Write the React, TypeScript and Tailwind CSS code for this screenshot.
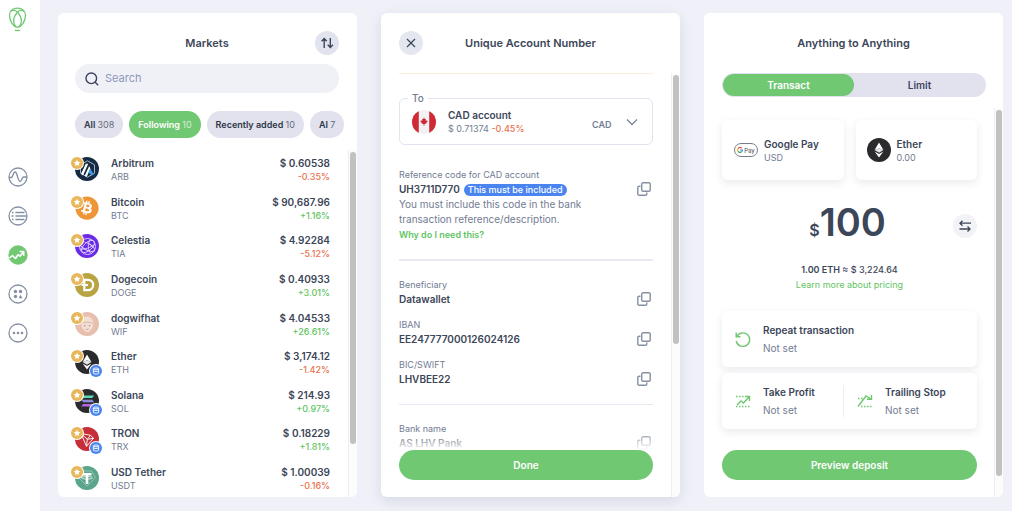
import { useState, type ReactNode } from 'react';
import { FaBitcoin } from 'react-icons/fa';

type Coin = {
  name: string;
  symbol: string;
  price: string;
  change: string;
  staked?: boolean;
  logo: ReactNode;
};

function Disc({ color, children }: { color: string; children?: ReactNode }) {
  return (
    <svg viewBox="0 0 24 24" className="size-6" aria-hidden="true">
      <circle cx="12" cy="12" r="12" fill={color} />
      {children}
    </svg>
  );
}

function EtherLogo() {
  return (
    <Disc color="#2b2b2e">
      <path d="M12 4.5 7.6 12.1 12 10.2l4.4 1.9z" fill="#fff" />
      <path d="m7.6 12.1 4.4 2.6 4.4-2.6-4.4-1.9z" fill="#e4e4e8" />
      <path d="m7.6 13.4 4.4 6.1 4.4-6.1-4.4 2.6z" fill="#fff" />
    </Disc>
  );
}

const coins: Coin[] = [
  {
    name: 'Arbitrum',
    symbol: 'ARB',
    price: '$ 0.60538',
    change: '-0.35%',
    logo: (
      <Disc color="#162a42">
        <path d="m12.5 3.8 7 4v8.4l-7 4-7-4V7.8z" fill="none" stroke="#9fb8cc" strokeWidth="1" />
        <path d="m6 17 4.8-10.2h2.4L8 18.4zM9.6 19l4.6-10 1.1 2.6-3.5 8.2z" fill="#fff" />
        <path d="m13.5 15.8 1.9-4.2 3.3 5.8-1.8 1.1z" fill="#3f9ae8" />
      </Disc>
    ),
  },
  {
    name: 'Bitcoin',
    symbol: 'BTC',
    price: '$ 90,687.96',
    change: '+1.16%',
    logo: <FaBitcoin className="size-6 text-[#ee9637]" />,
  },
  {
    name: 'Celestia',
    symbol: 'TIA',
    price: '$ 4.92284',
    change: '-5.12%',
    logo: (
      <Disc color="#6a2be6">
        <g fill="none" stroke="#e2d3ff" strokeWidth="0.9">
          <circle cx="12.5" cy="12.5" r="8" />
          <ellipse cx="12" cy="12.5" rx="8.4" ry="3.4" transform="rotate(28 12 12.5)" />
          <ellipse cx="13" cy="12.5" rx="8" ry="4" transform="rotate(-42 13 12.5)" />
          <path d="M15.5 5c-3 4-3 11 .5 14.5M5 15c5 .5 10-1 15-5" />
        </g>
      </Disc>
    ),
  },
  {
    name: 'Dogecoin',
    symbol: 'DOGE',
    price: '$ 0.40933',
    change: '+3.01%',
    logo: (
      <Disc color="#b9a444">
        <path d="M9.3 6.8H13a5.2 5.2 0 0 1 0 10.4H9.3zM6.5 12H13" fill="none" stroke="#fff" strokeWidth="2.2" />
      </Disc>
    ),
  },
  {
    name: 'dogwifhat',
    symbol: 'WIF',
    price: '$ 4.04533',
    change: '+26.61%',
    logo: (
      <Disc color="#e6bfae">
        <path d="M6 11.5C6 7 8.5 4.5 12 4.5s6 2.5 6.5 7l-1 4.5-3.5 4h-3l-4-4z" fill="#f3ded5" />
        <path d="M6 11.5c3-1.8 9-1.8 12.5 0" fill="none" stroke="#d9a997" strokeWidth="0.8" />
        <circle cx="9.8" cy="13.8" r="0.8" fill="#c08b7a" />
        <circle cx="14.6" cy="13.8" r="0.8" fill="#c08b7a" />
        <path d="M10.8 16.8c.8.9 2 .9 2.8 0" fill="none" stroke="#c08b7a" strokeWidth="0.8" />
      </Disc>
    ),
  },
  { name: 'Ether', symbol: 'ETH', price: '$ 3,174.12', change: '-1.42%', staked: true, logo: <EtherLogo /> },
  {
    name: 'Solana',
    symbol: 'SOL',
    price: '$ 214.93',
    change: '+0.97%',
    staked: true,
    logo: (
      <Disc color="#2b2b2e">
        <path d="M8.2 6.5h11l-2 2.5h-11z" fill="#5fd9b4" />
        <path d="M6.2 10.8h11l2 2.5h-11z" fill="#8a8fd6" />
        <path d="M8.2 15h11l-2 2.5h-11z" fill="#b565e0" />
      </Disc>
    ),
  },
  {
    name: 'TRON',
    symbol: 'TRX',
    price: '$ 0.18229',
    change: '+1.81%',
    staked: true,
    logo: (
      <Disc color="#c62f39">
        <path
          d="m6 6.5 9.5 1.8 3 3-7 8zM6 6.5l6.3 5.8 3.2-4M12.3 12.3l6.2-1M12.3 12.3l-.8 7"
          fill="none"
          stroke="#fff"
          strokeWidth="0.9"
          strokeLinejoin="round"
        />
      </Disc>
    ),
  },
  {
    name: 'USD Tether',
    symbol: 'USDT',
    price: '$ 1.00039',
    change: '-0.16%',
    logo: (
      <Disc color="#5ba58d">
        <path d="M7.5 5h9l4 6.5-8.5 8.5-8.5-8.5z" fill="none" stroke="#9ccbbb" strokeWidth="0.8" />
        <path d="M7.5 7h9v2.4h-3.2V18h-2.6V9.4H7.5z" fill="#fff" />
        <ellipse cx="12" cy="11.8" rx="5.5" ry="1.3" fill="none" stroke="#fff" strokeWidth="0.7" />
      </Disc>
    ),
  },
];

const filters = [
  { label: 'All', count: 308 },
  { label: 'Following', count: 10 },
  { label: 'Recently added', count: 10 },
  { label: 'AI', count: 7 },
];

const navItems: { label: string; icon: ReactNode; active?: boolean }[] = [
  {
    label: 'Activity',
    icon: <path d="M1 10.5h2.3c1.6 0 1.8-5.5 3.7-5.5 2.4 0 2.8 9.5 5 9.5 1.9 0 1.8-4.5 3.3-4.5H19" />,
  },
  {
    label: 'Orders',
    icon: <path d="M7.5 6.5h9M7.5 10h11M7.5 13.5h9M4 6.5h1.5M3.5 10h2M4 13.5h1.5" />,
  },
  {
    label: 'Trade',
    active: true,
    icon: <path d="m1.5 13 3-2.5 3 3 2.5-3.8 2 1.5L15.500 6.700M11.500 6.500h4.200v4.200" />,
  },
  {
    label: 'Apps',
    icon: (
      <g fill="currentColor" stroke="none">
        <circle cx="7.500" cy="7.500" r="1.700" />
        <circle cx="12.500" cy="7.500" r="1.700" />
        <circle cx="7.500" cy="12.500" r="1.700" />
        <path d="m12.500 10.700 2 3.500h-4z" />
      </g>
    ),
  },
  {
    label: 'More',
    icon: (
      <g fill="currentColor" stroke="none">
        <circle cx="6" cy="10" r="1.300" />
        <circle cx="10" cy="10" r="1.300" />
        <circle cx="14" cy="10" r="1.300" />
      </g>
    ),
  },
];

function Sidebar() {
  return (
    <aside className="flex w-10 shrink-0 flex-col bg-white pt-[7px] pl-2">
      <a href="#home" aria-label="Home" className="w-5 text-[#71c873]">
        <svg viewBox="0 0 20 26" className="h-[26px] w-5" fill="none" stroke="currentColor" strokeWidth="1.3">
          <path d="M9.5 1.2C4.5 1.2 1.500 4 1.500 8.200c0 5.300 3.500 11.800 8 11.800s8-6.500 8-11.800c0-4.200-3-7-8-7z" />
          <path d="M3 4.500C5 2.500 8 3.500 9.500 5.200c2.300 2.400 3.800 5.500 3.800 8.800 0 2.400-.8 4.500-2.300 5.700" />
          <path d="M16 4.500C14 2.500 11 3.500 9.500 5.200 7.200 7.600 5.700 10.700 5.700 14c0 2.400.8 4.500 2.300 5.700" />
          <path d="M6.800 23.500h5.400" />
        </svg>
      </a>
      <nav className="mt-[134px] flex flex-col gap-[19px]">
        {navItems.map((item) => (
          <a
            key={item.label}
            href={`#${item.label.toLowerCase()}`}
            aria-label={item.label}
            className={item.active ? 'text-[#71c873]' : 'text-[#8590a3]'}
          >
            <svg viewBox="0 0 20 20" className="size-5" fill="none" strokeLinejoin="round">
              <circle
                cx="10"
                cy="10"
                r="9"
                stroke="currentColor"
                strokeWidth="1.3"
                fill={item.active ? 'currentColor' : 'none'}
              />
              <g stroke={item.active ? '#fff' : 'currentColor'} strokeWidth={item.active ? 1.6 : 1.4}>
                {item.icon}
              </g>
            </svg>
          </a>
        ))}
      </nav>
    </aside>
  );
}

function ScrollTrack({ thumb }: { thumb: string }) {
  return (
    <div
      className="flex w-[9px] shrink-0 flex-col items-end border-l border-[#eeeef0] bg-[#fcfcfc] py-0.5 pr-px"
      aria-hidden="true"
    >
      <div className={`w-1.5 rounded-full bg-[#c1c1c1] ${thumb}`} />
    </div>
  );
}

function CoinRow({ coin }: { coin: Coin }) {
  return (
    <li className="flex min-h-0 flex-1 items-center">
      <div className="relative size-6 shrink-0">
        {coin.logo}
        <span className="absolute top-0 -left-1 flex size-3 items-center justify-center rounded-full bg-[#e8b75b] ring-1 ring-white">
          <svg viewBox="0 0 12 12" className="size-2 fill-white" aria-hidden="true">
            <path d="m6 1 1.5 3.2 3.5.5-2.6 2.4.7 3.5L6 8.9l-3.1 1.7.7-3.5L1 4.700l3.500-.5z" />
          </svg>
        </span>
        {coin.staked ? (
          <span className="absolute -right-[3px] -bottom-[3px] flex size-3 items-center justify-center rounded-full bg-[#4a84f0] ring-1 ring-white">
            <svg viewBox="0 0 12 12" className="size-2.5" fill="none" stroke="#fff" strokeWidth="1.1" aria-hidden="true">
              <ellipse cx="6" cy="3.5" rx="3.2" ry="1.100" />
              <path d="M2.800 3.500v5c0 .8 1.400 1.100 3.200 1.100s3.200-.3 3.200-1.100v-5M2.800 6c.5.8 5.900.8 6.400 0" />
            </svg>
          </span>
        ) : null}
      </div>
      <div className="ml-3 flex-1 pt-0.5">
        <p className="text-[10px] leading-[13px] font-semibold text-[#3c4659]">{coin.name}</p>
        <p className="text-[9px] leading-[13px] text-[#727c92]">{coin.symbol}</p>
      </div>
      <div className="pt-0.5 text-right">
        <p className="text-[10px] leading-[13px] font-semibold text-[#3c4659]">{coin.price}</p>
        <p
          className={`text-[9px] leading-[13px] font-medium ${coin.change.startsWith('-') ? 'text-[#ea7350]' : 'text-[#5fc463]'}`}
        >
          {coin.change}
        </p>
      </div>
    </li>
  );
}

function MarketsPanel() {
  const [active, setActive] = useState('Following');
  const [query, setQuery] = useState('');

  return (
    <section className="flex min-w-0 flex-col overflow-hidden rounded-md bg-white">
      <header className="mt-[18px] grid grid-cols-[24px_1fr_24px] items-center pr-[18px] pl-[17px]">
        <h2 className="col-start-2 text-center text-[11px] font-semibold text-[#3c4659]">Markets</h2>
        <button
          type="button"
          aria-label="Sort"
          className="flex size-6 items-center justify-center rounded-full bg-[#e1e4ee] text-[#3c4659]"
        >
          <svg viewBox="0 0 16 16" className="size-4" fill="none" stroke="currentColor" strokeWidth="1.4">
            <path d="M5.2 13V3.500M2.600 6.200l2.600-2.700 2.600 2.700M11.300 3v9.500M8.700 9.800l2.600 2.700 2.600-2.700" />
          </svg>
        </button>
      </header>

      <label className="mt-[9px] mr-[18px] ml-[17px] flex h-[29px] items-center rounded-full bg-[#f0f1f6] pl-[10px]">
        <svg viewBox="0 0 14 14" className="size-3.5" fill="none" stroke="#3c4260" strokeWidth="1.4" aria-hidden="true">
          <circle cx="6.300" cy="6.300" r="5.300" />
          <path d="m10.200 10.200 3 3" />
        </svg>
        <input
          type="text"
          aria-label="Search markets"
          placeholder="Search"
          value={query}
          onChange={(event) => setQuery(event.target.value)}
          className="ml-1.5 min-w-0 flex-1 bg-transparent text-[11px] outline-none placeholder:text-[#8d97bd]"
        />
      </label>

      <div className="mt-[18px] mr-3 ml-[17px] flex gap-1.5 overflow-hidden rounded-r-full">
        {filters.map((filter) => (
          <button
            key={filter.label}
            type="button"
            onClick={() => setActive(filter.label)}
            className={`h-[27px] shrink-0 rounded-full px-[9px] text-[9px] font-semibold whitespace-nowrap ${
              active === filter.label ? 'bg-[#71c873] text-white' : 'bg-[#e1e2ed] text-[#2f3748]'
            }`}
          >
            {filter.label} <span className="font-normal opacity-70">{filter.count}</span>
          </button>
        ))}
      </div>

      <div className="mt-3 flex min-h-0 flex-1">
        <ul className="flex min-h-0 flex-1 flex-col pr-[18px] pl-[17px]">
          {coins.map((coin) => (
            <CoinRow key={coin.symbol} coin={coin} />
          ))}
        </ul>
        <ScrollTrack thumb="h-[85%]" />
      </div>
    </section>
  );
}

function CopyRow({ label, value, badge }: { label: string; value: string; badge?: string }) {
  return (
    <div className="relative pr-8">
      <p className="text-[9px] leading-[15px] text-[#727c92]">{label}</p>
      <p className="flex items-center gap-1 text-[10px] leading-[15px] font-semibold text-[#3c4659]">
        {value}
        {badge ? (
          <span className="rounded-full bg-[#4a84f0] px-1 text-[9px] leading-3 font-medium whitespace-nowrap text-white">
            {badge}
          </span>
        ) : null}
      </p>
      <button type="button" aria-label={`Copy ${label}`} className="absolute right-0.5 bottom-px text-[#8590a3]">
        <svg viewBox="0 0 14 14" className="size-3.5" fill="none" stroke="currentColor" strokeWidth="1.4">
          <rect x="4.700" y="0.800" width="8.500" height="8.500" rx="1.300" />
          <path d="M3.500 4.200H2.100A1.300 1.300 0 0 0 .8 5.500v6.400a1.300 1.300 0 0 0 1.300 1.300h6.400a1.300 1.300 0 0 0 1.300-1.300v-1.400" />
        </svg>
      </button>
    </div>
  );
}

function AccountPanel() {
  return (
    <section className="flex min-w-0 flex-col overflow-hidden rounded-md bg-white shadow-[0_4px_14px_rgba(120,130,170,0.22)]">
      <header className="mt-[18px] grid grid-cols-[24px_1fr_24px] items-center px-[18px]">
        <button
          type="button"
          aria-label="Close"
          className="flex size-6 items-center justify-center rounded-full bg-[#e5e7f0] text-[#3c4659]"
        >
          <svg viewBox="0 0 10 10" className="size-2.5" fill="none" stroke="currentColor" strokeWidth="1.2">
            <path d="m1 1 8 8M9 1 1 9" />
          </svg>
        </button>
        <h2 className="text-center text-[11px] font-semibold whitespace-nowrap text-[#3c4659]">Unique Account Number</h2>
      </header>

      <div className="mt-[18px] flex min-h-0 flex-1">
        <div className="flex min-w-0 flex-1 flex-col px-[18px] pb-[17px]">
          <div className="relative min-h-0 flex-1 overflow-hidden">
            <hr className="border-[#fdeedc]" />
            <fieldset className="mt-[17px] rounded-md border border-[#e0e4ee] pr-3 pb-1.5 pl-3">
              <legend className="-ml-1 px-1 text-[10px] leading-3.5 font-medium text-[#727c92]">To</legend>
              <div className="flex h-[33px] items-center">
                <svg viewBox="0 0 24 24" className="size-6" aria-hidden="true">
                  <clipPath id="flag">
                    <circle cx="12" cy="12" r="12" />
                  </clipPath>
                  <g clipPath="url(#flag)">
                    <path d="M0 0h24v24H0z" fill="#f2f2f3" />
                    <path d="M0 0h6.800v24H0zM17.200 0H24v24h-6.800z" fill="#cf2b36" />
                    <path
                      d="m12 7.500 1 1.700 1-.4-.3 2.200 1.200-.7.8 1.300-2.300 2.400h-1v1.800h-.8V14h-1l-2.300-2.400.8-1.300 1.200.7L10 8.800l1 .4z"
                      fill="#cf2b36"
                    />
                  </g>
                </svg>
                <div className="ml-3 flex-1 pt-px">
                  <p className="text-[10px] leading-[13px] font-semibold text-[#3c4659]">CAD account</p>
                  <p className="text-[9px] leading-[13px] text-[#727c92]">
                    $ 0.71374 <span className="font-medium text-[#ea7350]">-0.45%</span>
                  </p>
                </div>
                <div className="relative">
                  <select
                    aria-label="Account currency"
                    className="w-12 appearance-none bg-transparent text-[9px] font-semibold text-[#727c92] outline-none"
                  >
                    <option>CAD</option>
                    <option>USD</option>
                    <option>EUR</option>
                  </select>
                  <svg
                    viewBox="0 0 12 8"
                    className="pointer-events-none absolute top-1/2 right-0.5 h-2 w-3 -translate-y-1/2"
                    fill="none"
                    stroke="#7d879a"
                    strokeWidth="1.3"
                    aria-hidden="true"
                  >
                    <path d="m1 1.500 5 5 5-5" />
                  </svg>
                </div>
              </div>
            </fieldset>

            <div className="mt-[22px]">
              <CopyRow label="Reference code for CAD account" value="UH3711D770" badge="This must be included" />
              <p className="w-[210px] text-[10px] leading-[15px] text-[#727c92]">
                You must include this code in the bank transaction reference/description.
              </p>
              <a href="#why" className="block text-[9px] leading-[15px] font-semibold text-[#5fc463]">
                Why do I need this?
              </a>
            </div>

            <hr className="mt-[17px] border-t-2 border-[#e6e9f2]" />
            <div className="mt-4 flex flex-col gap-2.5">
              <CopyRow label="Beneficiary" value="Datawallet" />
              <CopyRow label="IBAN" value="EE247777000126024126" />
              <CopyRow label="BIC/SWIFT" value="LHVBEE22" />
            </div>
            <hr className="mt-[17px] border-[#e6e9f2]" />
            <div className="mt-4">
              <CopyRow label="Bank name" value="AS LHV Pank" />
            </div>
            <div className="pointer-events-none absolute inset-x-0 bottom-0 h-4 bg-linear-to-t from-white to-white/20" />
          </div>
          <button type="button" className="h-[30px] shrink-0 rounded-full bg-[#71c873] text-[10px] font-semibold text-white">
            Done
          </button>
        </div>
        <ScrollTrack thumb="h-[64%]" />
      </div>
    </section>
  );
}

const cardShadow = 'rounded-md bg-white shadow-[0_3px_9px_rgba(40,50,80,0.1)]';

function Setting({ title, icon }: { title: string; icon: ReactNode }) {
  return (
    <button type="button" className="flex flex-1 items-center text-left">
      <svg
        viewBox="0 0 16 16"
        className="ml-[13px] size-4 shrink-0"
        fill="none"
        stroke="#71c873"
        strokeWidth="1.4"
        aria-hidden="true"
      >
        {icon}
      </svg>
      <span className="ml-3 flex flex-col whitespace-nowrap">
        <span className="text-[10px] leading-[18px] font-semibold text-[#3c4659]">{title}</span>
        <span className="text-[10px] leading-[18px] text-[#727c92]">Not set</span>
      </span>
    </button>
  );
}

function TradePanel() {
  const [mode, setMode] = useState('Transact');
  const [amount, setAmount] = useState('100');

  return (
    <section className="flex min-w-0 flex-col overflow-hidden rounded-md bg-white">
      <h2 className="mt-[18px] text-center text-[11px] leading-6 font-semibold text-[#3c4659]">Anything to Anything</h2>
      <div className="mt-[18px] mr-[17px] ml-[18px] flex h-6 rounded-full bg-[#e1e2ed] p-px">
        {['Transact', 'Limit'].map((tab) => (
          <button
            key={tab}
            type="button"
            onClick={() => setMode(tab)}
            className={`flex-1 rounded-full text-[10px] font-semibold ${
              mode === tab ? 'bg-[#71c873] text-white' : 'text-[#3f4565]'
            }`}
          >
            {tab}
          </button>
        ))}
      </div>

      <div className="mt-[11px] flex min-h-0 flex-1">
        <div className="flex min-w-0 flex-1 flex-col overflow-hidden pt-3 pr-[17px] pb-[17px] pl-[18px]">
          <div className="grid grid-cols-2 gap-3">
            <button type="button" className={`flex h-[60px] items-center pl-3 text-left ${cardShadow}`}>
              <span className="flex h-3.5 w-6 shrink-0 items-center justify-center rounded-full border border-[#777d88] text-[6px] font-medium text-[#5f6368]">
                <svg viewBox="0 0 10 10" className="mr-px size-[6px]" fill="none" strokeWidth="2" aria-hidden="true">
                  <path d="M8 2A4 4 0 0 0 1.600 3" stroke="#ea4335" />
                  <path d="M1.600 3a4 4 0 0 0 0 4" stroke="#fbbc04" />
                  <path d="M1.600 7A4 4 0 0 0 7.700 8" stroke="#34a853" />
                  <path d="M7.700 8A4 4 0 0 0 9 5H5" stroke="#4285f4" />
                </svg>
                Pay
              </span>
              <span className="ml-1.5 flex flex-col pt-px whitespace-nowrap">
                <span className="text-[10px] leading-[13px] font-semibold text-[#3c4659]">Google Pay</span>
                <span className="text-[9px] leading-[13px] text-[#727c92]">USD</span>
              </span>
            </button>
            <button type="button" className={`flex h-[60px] items-center pl-[11px] text-left ${cardShadow}`}>
              <EtherLogo />
              <span className="ml-1.5 flex flex-col pt-px">
                <span className="text-[10px] leading-[13px] font-semibold text-[#3c4659]">Ether</span>
                <span className="text-[9px] leading-[13px] text-[#727c92]">0.00</span>
              </span>
            </button>
          </div>

          <div className="mt-[22px] grid grid-cols-[24px_1fr_24px] items-center">
            <div className="col-start-2 flex items-baseline justify-center font-semibold text-[#3c4659]">
              <span className="text-base leading-10">$</span>
              <input
                type="text"
                aria-label="Amount in dollars"
                inputMode="decimal"
                value={amount}
                onChange={(event) => setAmount(event.target.value)}
                className="h-10 w-[70px] bg-transparent text-[38px] leading-10 outline-none"
              />
            </div>
            <button
              type="button"
              aria-label="Swap"
              className="flex size-6 items-center justify-center rounded-full bg-[#f2f3f6] text-[#3c4659]"
            >
              <svg viewBox="0 0 14 14" className="size-3.5" fill="none" stroke="currentColor" strokeWidth="1.3">
                <path d="M13 4.200H2M4.500 1.700 2 4.200l2.500 2.500M1.500 10H12M9.500 7.500 12 10l-2.500 2.500" />
              </svg>
            </button>
          </div>

          <div className="mt-3 text-center text-[9px] leading-[15px] text-[#3c4659]">
            <p className="font-medium">
              <span className="font-semibold">1.00 ETH</span> ≈ $ 3,224.64
            </p>
            <a href="#pricing" className="text-[#5fc463]">
              Learn more about pricing
            </a>
          </div>

          <div className={`mt-[19px] flex h-14 ${cardShadow}`}>
            <Setting
              title="Repeat transaction"
              icon={<path d="M1.200 1.500v4.300h4.300M1.800 5.600A6.800 6.800 0 1 1 1.200 10" />}
            />
          </div>
          <div className={`mt-1.5 flex h-14 items-center pr-3 ${cardShadow}`}>
            <Setting
              title="Take Profit"
              icon={
                <>
                  <path d="M1 3.500h9M1 13.500h14" strokeDasharray="1.500 1.500" />
                  <path d="m2 12 4-4 2.500 2L14 4M10 3.500h4.500V8" />
                </>
              }
            />
            <div className="h-8 w-px bg-[#eceef3]" />
            <Setting
              title="Trailing Stop"
              icon={
                <>
                  <path d="M1 5.500h5M4 13.500h11" strokeDasharray="1.500 1.500" />
                  <path d="m1 13.500 8-10.500 5 3M10 6.200h4.500V2" />
                </>
              }
            />
          </div>

          <button
            type="button"
            className="mt-auto h-[30px] shrink-0 rounded-full bg-[#71c873] text-[10px] font-semibold text-white"
          >
            Preview deposit
          </button>
        </div>
        <ScrollTrack thumb="h-[95%]" />
      </div>
    </section>
  );
}

export default function App() {
  return (
    <div className="flex h-screen bg-[#f0f1f8] font-[Inter,'Liberation_Sans',sans-serif]">
      <Sidebar />
      <main className="grid min-w-0 flex-1 grid-cols-3 gap-6 pt-[13px] pr-[9px] pb-3.5 pl-[18px]">
        <MarketsPanel />
        <AccountPanel />
        <TradePanel />
      </main>
    </div>
  );
}
